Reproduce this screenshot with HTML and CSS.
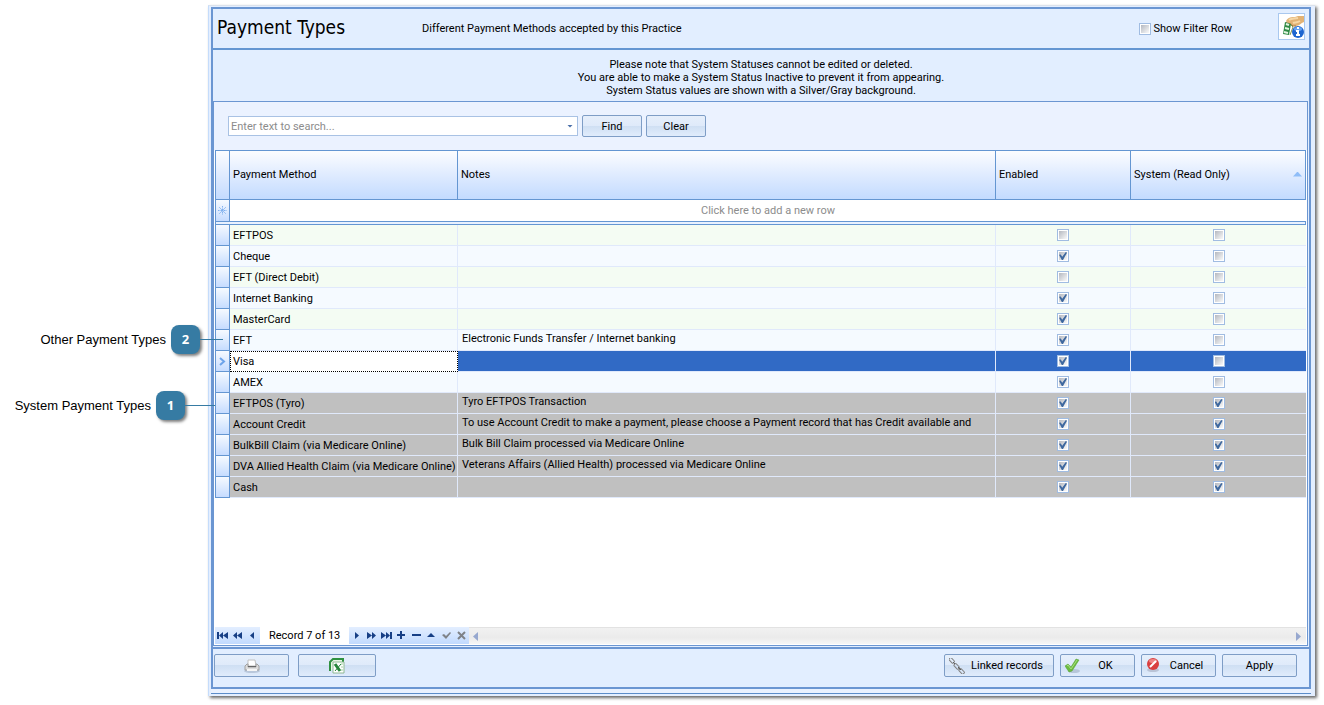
FILE: index.html
```html
<!DOCTYPE html>
<html lang="en">
<head>
    <meta charset="UTF-8">
    <meta name="viewport" content="width=device-width, initial-scale=1.0">
    <title>Payment Types</title>
    <link rel="stylesheet" href="styles.css">
</head>
<body>
    <aside class="callouts">
        <div class="callout">
            <span>Other Payment Types</span>
            <span class="callout-badge">2</span>
        </div>
        <div class="callout callout-system">
            <span>System Payment Types</span>
            <span class="callout-badge">1</span>
        </div>
    </aside>

    <div class="window">
        <main class="dialog">
            <header class="dialog-header">
                <h1>Payment Types</h1>
                <p class="subtitle">Different Payment Methods accepted by this Practice</p>
                <label class="filter-toggle"><input type="checkbox" class="check"> Show Filter Row</label>
                <button type="button" class="info-button" aria-label="Payment info">
                    <svg width="24" height="24" viewBox="0 0 24 24">
                        <path d="M6 6 C8 2 12 2 15 2 L18 1 H24 V7 C21 8 19 11 16 11 C13 12 12 9 9 9 Z" fill="#e2b274"/>
                        <path d="M9 5 C12 3 14 4 18 3 M13 8 C15 7 17 8 20 6" fill="none" stroke="#f6d7a6" stroke-width="2"/>
                        <path d="M6 7 C8 9 11 8 13 11 L16 11" fill="none" stroke="#a9763b"/>
                        <path d="M5 7 L11 9 L9 20 L3 19 Z" fill="#2f8a45"/>
                        <path d="M6 9 L9 10 M5 13 L9 14 M4 17 L8 18" stroke="#e4f5e2" stroke-width="2"/>
                        <path d="M11 10 L13 12 L10 20" fill="none" stroke="#8a9a50"/>
                        <circle cx="18" cy="17" r="6" fill="#1e66d0"/>
                        <ellipse cx="18" cy="14" rx="4" ry="2" fill="#68a4f2"/>
                        <path d="M18 12 V14 M16 16 H18 V20 M16 20 H20" stroke="#fff" stroke-width="2" fill="none"/>
                    </svg>
                </button>
            </header>

            <div class="notice">
                <p>Please note that System Statuses cannot be edited or deleted.</p>
                <p>You are able to make a System Status Inactive to prevent it from appearing.</p>
                <p>System Status values are shown with a Silver/Gray background.</p>
            </div>

            <section class="grid-panel">
                <form class="search-bar">
                    <div class="search-box">
                        <input type="text" aria-label="Search" placeholder="Enter text to search...">
                        <button type="button" aria-label="Recent searches"></button>
                    </div>
                    <button type="button" class="btn btn-small">Find</button>
                    <button type="button" class="btn btn-small">Clear</button>
                </form>

                <table class="grid">
                    <colgroup>
                        <col class="col-indicator">
                        <col class="col-method">
                        <col class="col-notes">
                        <col class="col-enabled">
                        <col class="col-system">
                    </colgroup>
                    <thead>
                        <tr>
                            <th></th>
                            <th>Payment Method</th>
                            <th>Notes</th>
                            <th>Enabled</th>
                            <th class="sorted">System (Read Only)</th>
                        </tr>
                    </thead>
                    <tbody>
                        <tr class="new-row">
                            <td class="indicator">
                                <svg width="9" height="9" viewBox="0 0 9 9"><path d="M4.500 0 V9 M0 4.500 H9 M1 1 L8 8 M8 1 L1 8" stroke="#7fb0ee" stroke-dasharray="1 .5"/></svg>
                            </td>
                            <td colspan="4">Click here to add a new row</td>
                        </tr>
                        <tr class="splitter"><td colspan="5"></td></tr>
                    </tbody>
                    <tbody id="rows"></tbody>
                </table>

                <nav class="navigator">
                    <button type="button" aria-label="First"><svg width="11" height="9" viewBox="0 0 11 9"><path d="M0 1h2v7H0zM6 1v7L2 4.500zM11 1v7L6 4.500z"/></svg></button>
                    <button type="button" aria-label="Previous page"><svg width="11" height="9" viewBox="0 0 11 9"><path d="M5 1v7L1 4.500zM10 1v7L5 4.500z"/></svg></button>
                    <button type="button" aria-label="Previous"><svg width="11" height="9" viewBox="0 0 11 9"><path d="M7 1v7L3 4.500z"/></svg></button>
                    <span class="record">Record 7 of 13</span>
                    <button type="button" aria-label="Next"><svg width="11" height="9" viewBox="0 0 11 9"><path d="M4 1v7l4-3.500z"/></svg></button>
                    <button type="button" aria-label="Next page"><svg width="11" height="9" viewBox="0 0 11 9"><path d="M1 1v7l5-3.500zM6 1v7l4-3.500z"/></svg></button>
                    <button type="button" aria-label="Last"><svg width="11" height="9" viewBox="0 0 11 9"><path d="M0 1v7l5-3.500zM5 1v7l4-3.500zM9 1h2v7H9z"/></svg></button>
                    <button type="button" aria-label="Add"><svg width="11" height="9" viewBox="0 0 11 9"><path d="M4 0h2v3h3v2H6v3H4V5H1V3h3z"/></svg></button>
                    <button type="button" aria-label="Delete"><svg width="11" height="9" viewBox="0 0 11 9"><path d="M1 3h9v2H1z"/></svg></button>
                    <button type="button" aria-label="Edit"><svg width="11" height="9" viewBox="0 0 11 9"><path d="M1 6h8L5 2z"/></svg></button>
                    <button type="button" aria-label="Post" disabled><svg width="11" height="9" viewBox="0 0 11 9"><path d="M1 4l2-1 2 2 4-4 1 1-5 6z"/></svg></button>
                    <button type="button" aria-label="Cancel edit" disabled><svg width="11" height="9" viewBox="0 0 11 9"><path d="M2 1l7 7M9 1L2 8" stroke="#7e8287" stroke-width="2"/></svg></button>
                    <div class="scrollbar">
                        <svg width="6" height="9" viewBox="0 0 6 9"><path d="M5 0v9L0 4.500z"/></svg>
                        <svg width="6" height="9" viewBox="0 0 6 9"><path d="M0 0v9l5-4.500z"/></svg>
                    </div>
                </nav>
            </section>

            <footer class="dialog-footer">
                <button type="button" class="btn btn-print" aria-label="Print">
                    <svg width="16" height="14" viewBox="0 0 16 14">
                        <ellipse cx="8" cy="12" rx="8" ry="2" fill="#b9c8dc"/>
                        <path d="M4 1h7l1 6H4z" fill="#fff" stroke="#c0c0c0"/>
                        <path d="M1 7l2-2h1v3h8V5h1l2 2v4H1z" fill="#dcdcdc" stroke="#a0a0a0"/>
                        <path d="M4 7h8v1H4z" fill="#666"/>
                        <path d="M3 10h10v2H3z" fill="#f6f6f6"/>
                    </svg>
                </button>
                <button type="button" class="btn btn-excel" aria-label="Export to Excel">
                    <svg width="16" height="16" viewBox="0 0 16 16">
                        <path d="M1 13V4l3-3h10v3" fill="#eaf7e6" stroke="#2f9140" stroke-width="2"/>
                        <path d="M4 4h11v11H4z" fill="#fff" stroke="#8fb893"/>
                        <path d="M12 6h2M12 9h2M12 12h2" stroke="#a5d4a5"/>
                        <path d="M6 6l5 7" stroke="#26853a" stroke-width="3"/>
                        <path d="M12 6l-6 7" stroke="#26853a" stroke-width="1"/>
                    </svg>
                </button>
                <span class="spacer"></span>
                <button type="button" class="btn btn-linked">
                    <svg width="16" height="16" viewBox="0 0 16 16">
                        <g fill="none" stroke="#808080">
                            <rect x="-3" y="-1" width="6" height="3" rx="1" transform="translate(3 2) rotate(46)"/>
                            <rect x="-3" y="-1" width="6" height="3" rx="1" transform="translate(8 8) rotate(46)"/>
                            <rect x="-3" y="-1" width="6" height="3" rx="1" transform="translate(13 13) rotate(46)"/>
                        </g>
                        <path d="M4 4l2 2M9 9l3 3" stroke="#606060"/>
                    </svg>
                    <span>Linked records</span>
                </button>
                <button type="button" class="btn btn-action">
                    <svg width="16" height="16" viewBox="0 0 16 16">
                        <ellipse cx="9" cy="13" rx="6" ry="2" fill="#b6c6da"/>
                        <path d="M0 8l3-2 3 3 5-8 3 1-7 11-3 1z" fill="#6cbb40" stroke="#4f9f2c" stroke-width=".5"/>
                        <path d="M2 8l1-1 3 4 6-9" fill="none" stroke="#a9e07f"/>
                    </svg>
                    <span>OK</span>
                </button>
                <button type="button" class="btn btn-action">
                    <svg width="16" height="16" viewBox="0 0 16 16">
                        <ellipse cx="7" cy="12" rx="6" ry="2" fill="#b9c3d6"/>
                        <circle cx="7" cy="6" r="6" fill="#d93f3f"/>
                        <ellipse cx="7" cy="3" rx="4" ry="2" fill="#ef8585"/>
                        <path d="M4 9l6-6" stroke="#fff" stroke-width="2"/>
                    </svg>
                    <span>Cancel</span>
                </button>
                <button type="button" class="btn btn-action"><span>Apply</span></button>
            </footer>
        </main>
    </div>

    <script src="script.js"></script>
</body>
</html>
```
FILE: styles.css
```css
* {
    box-sizing: border-box;
}
body {
    margin: 0;
    min-height: 100vh;
    display: flex;
    background-color: #fff;
    color: #000;
    font-family: Tahoma, Roboto, sans-serif;
    font-size: 11px;
    line-height: 13px;
}
button, input {
    font: inherit;
    color: inherit;
}
h1, p {
    margin: 0;
    font-weight: normal;
}
svg {
    display: block;
    flex: none;
}

/* callouts */
.callouts {
    flex: none;
    width: 208px;
    padding: 325px 8px 0 0;
    font: 13px "Liberation Sans", Arial, sans-serif;
}
.callout {
    position: relative;
    display: flex;
    align-items: center;
    justify-content: flex-end;
    gap: 5px;
    margin-bottom: 37px;
}
.callout-system {
    margin-right: 15px;
}
.callout-badge {
    width: 29px;
    height: 29px;
    border-radius: 8px;
    background-color: #367ba3;
    box-shadow: 2px 2px 3px rgba(0, 0, 0, 0.5);
    color: #fff;
    font: bold 13px/29px "Open Sans", sans-serif;
    text-align: center;
}
.callout::after {
    content: "";
    position: absolute;
    left: 100%;
    top: 14px;
    width: 23px;
    height: 1px;
    background-color: #367ba3;
    z-index: 1;
}
.callout-system::after {
    width: 30px;
}

/* window frame */
.window {
    flex: 1;
    min-width: 0;
    display: flex;
    margin: 5px 9px 9px 0;
    padding: 1px 4px 7px 2px;
    background-color: #e3eeff;
    border-left: 1px solid #c5dcfb;
    border-top: 1px solid #dbe2ec;
    box-shadow: 2px 2px 3px rgba(0, 0, 0, 0.6);
}
.dialog {
    flex: 1;
    min-width: 0;
    display: flex;
    flex-direction: column;
    border: 2px solid #6b96d2;
    background-color: #e2eeff;
    box-shadow: 0 4px #e9f1ff, 0 5px #5b8cc9;
}
.dialog-header {
    display: flex;
    align-items: center;
    height: 41px;
    padding: 0 4px;
    border-bottom: 2px solid #6496d2;
}
.dialog-header h1 {
    width: 205px;
    font-family: Tahoma, "DejaVu Sans Condensed", sans-serif;
    font-size: 19px;
    line-height: 24px;
    padding-bottom: 4px;
}
.subtitle {
    flex: 1;
}
.filter-toggle {
    display: flex;
    align-items: center;
    gap: 3px;
    margin-right: 46px;
}
.info-button {
    width: 27px;
    height: 27px;
    padding: 1px;
    margin-bottom: 4px;
    border: 1px solid #a9c8ef;
    background-color: #fff;
}
.notice {
    padding: 8px 0 4px;
    text-align: center;
}

/* check boxes */
.check {
    appearance: none;
    position: relative;
    display: block;
    flex: none;
    width: 12px;
    height: 12px;
    margin: 0;
    padding: 1px;
    border: 1px solid #a0bce2;
    background: linear-gradient(135deg, #b4b8c0, #fafafa) content-box, #fff;
}
.check:checked::after {
    content: "";
    position: absolute;
    left: 1px;
    top: 1px;
    width: 8px;
    height: 8px;
    background-color: #3e689f;
    clip-path: polygon(0 35%, 22% 30%, 40% 60%, 85% 0, 100% 8%, 50% 100%, 35% 100%);
}

/* grid */
.grid-panel {
    flex: 1;
    display: flex;
    flex-direction: column;
    margin: 0 1px 1px 0;
    padding: 0 1px 1px;
    border: 1px solid #6b96d2;
    background-color: #fff;
}
.search-bar {
    display: flex;
    align-items: center;
    gap: 4px;
    height: 48px;
    margin: 0 -1px;
    padding: 0 14px;
    background-color: #ebf2ff;
}
.search-box {
    display: flex;
    width: 350px;
    height: 20px;
    border: 1px solid #a9c2e4;
    background-color: #fff;
}
.search-box input {
    flex: 1;
    min-width: 0;
    padding: 0 2px;
    border: none;
    background: none;
    outline: none;
}
.search-box input::placeholder {
    color: #8c8c8c;
    opacity: 1;
}
.search-box button {
    width: 14px;
    padding: 0;
    border: none;
    background: none;
}
.search-box button::before {
    content: "";
    display: block;
    margin: 0 auto;
    width: 6px;
    height: 3px;
    background-color: #4a6fa8;
    clip-path: polygon(0 0, 100% 0, 50% 100%);
}
.grid {
    width: 100%;
    table-layout: fixed;
    border-spacing: 0;
    border-top: 1px solid #6496d2;
}
.col-indicator {
    width: 15px;
}
.col-method {
    width: 228px;
}
.col-enabled {
    width: 135px;
}
.col-system {
    width: 175px;
}
.grid th {
    height: 49px;
    padding: 0 3px 2px;
    border-right: 1px solid #6496d2;
    border-bottom: 1px solid #6496d2;
    background: linear-gradient(#fcfdff, #dfebff 50%, #c3dbff);
    font-weight: normal;
    text-align: left;
}
.sorted::after {
    content: "";
    float: right;
    width: 9px;
    height: 5px;
    margin-top: 4px;
    background-color: #8fbdf8;
    clip-path: polygon(50% 0, 100% 100%, 0 100%);
}
.grid th:first-child, .indicator {
    border-left: 1px solid #6496d2;
}
.grid td {
    height: 21px;
    padding: 0 3px;
    border-right: 1px solid #e0e9fb;
    border-bottom: 1px solid #e0e9fb;
    white-space: nowrap;
    overflow: hidden;
}
.grid td:last-child {
    border-right: none;
}
.grid td.indicator {
    padding: 0 2px;
    border-right: 1px solid #6496d2;
    border-bottom: 1px solid #6496d2;
    background: linear-gradient(#f6faff, #c6dcff);
}
.new-row td {
    color: #8c8c8c;
    text-align: center;
}
.grid .new-row td {
    height: 22px;
    border-bottom: 1px solid #6496d2;
}
.grid .splitter td {
    height: 3px;
    padding: 0;
    border-left: 1px solid #6496d2;
    border-right: 1px solid #6496d2;
    border-bottom: 1px solid #6496d2;
    background-color: #e8f1ff;
}
.row-odd {
    background-color: #f4fcf3;
}
.row-even {
    background-color: #f5faff;
}
.row-system {
    background-color: #c0c0c0;
}
.row-selected {
    background-color: #316ac5;
}
.grid .row-selected .method {
    padding: 0 2px;
    border: 1px dotted #000;
    background-color: #fff;
}
.grid .notes {
    padding: 0 4px 4px;
}
.grid .check {
    margin: 0 auto;
}

/* record navigator */
.navigator {
    display: flex;
    height: 17px;
    margin-top: auto;
}
.navigator button {
    display: flex;
    align-items: center;
    justify-content: center;
    width: 15px;
    padding: 0;
    border: none;
    background: linear-gradient(#e3eeff, #c1dafe);
}
.navigator button svg {
    fill: #173f85;
}
.navigator button:disabled svg {
    fill: #7e8287;
}
.record {
    width: 89px;
    padding: 0 8px 0 9px;
    line-height: 17px;
    white-space: nowrap;
}
.scrollbar {
    flex: 1;
    display: flex;
    align-items: center;
    justify-content: space-between;
    padding: 0 4px;
    border-top: 1px solid #e2e2e2;
    background: linear-gradient(#f1f1f1, #ebebeb 60%, #f6f6f6);
    fill: #97a8cf;
}

/* buttons */
.btn {
    display: flex;
    align-items: center;
    justify-content: center;
    height: 23px;
    padding: 0 4px;
    border: 1px solid #7e9dc6;
    border-radius: 2px;
    background: linear-gradient(#e6effb, #dfeafa 48%, #cfdff3 50%, #e0ecfc);
}
.btn-small {
    width: 60px;
    height: 22px;
}
.dialog-footer {
    display: flex;
    gap: 6px;
    height: 40px;
    padding: 5px 12px 0 1px;
    border-top: 2px solid #6b96d2;
}
.spacer {
    flex: 1;
}
.btn-print {
    width: 75px;
    margin-right: 3px;
}
.btn-excel {
    width: 78px;
}
.btn-linked {
    width: 110px;
}
.btn-action {
    width: 75px;
}
.btn-linked span, .btn-action span {
    flex: 1;
    text-align: center;
}
```
FILE: script.js
```js
const rows = [
    { method: 'EFTPOS', notes: '', enabled: false, system: false },
    { method: 'Cheque', notes: '', enabled: true, system: false },
    { method: 'EFT (Direct Debit)', notes: '', enabled: false, system: false },
    { method: 'Internet Banking', notes: '', enabled: true, system: false },
    { method: 'MasterCard', notes: '', enabled: true, system: false },
    { method: 'EFT', notes: 'Electronic Funds Transfer / Internet banking', enabled: true, system: false },
    { method: 'Visa', notes: '', enabled: true, system: false, selected: true },
    { method: 'AMEX', notes: '', enabled: true, system: false },
    { method: 'EFTPOS (Tyro)', notes: 'Tyro EFTPOS Transaction', enabled: true, system: true },
    { method: 'Account Credit', notes: 'To use Account Credit to make a payment, please choose a Payment record that has Credit available and', enabled: true, system: true },
    { method: 'BulkBill Claim (via Medicare Online)', notes: 'Bulk Bill Claim processed via Medicare Online', enabled: true, system: true },
    { method: 'DVA Allied Health Claim (via Medicare Online)', notes: 'Veterans Affairs (Allied Health) processed via Medicare Online', enabled: true, system: true },
    { method: 'Cash', notes: '', enabled: true, system: true }
];

const arrow = '<svg width="8" height="9" viewBox="0 0 8 9"><path d="M2 1l4 3.500L2 8" fill="none" stroke="#6ea4ea" stroke-width="2"/></svg>';

function rowClass(row, index) {
    if (row.selected) return 'row-selected';
    if (row.system) return 'row-system';
    return index % 2 === 0 ? 'row-odd' : 'row-even';
}

function checkBox(label, checked) {
    return `<input type="checkbox" class="check" aria-label="${label}" ${checked ? 'checked' : ''}>`;
}

document.getElementById('rows').innerHTML = rows.map((row, index) => `
    <tr class="${rowClass(row, index)}">
        <td class="indicator">${row.selected ? arrow : ''}</td>
        <td class="method">${row.method}</td>
        <td class="notes">${row.notes}</td>
        <td>${checkBox(row.method + ' enabled', row.enabled)}</td>
        <td>${checkBox(row.method + ' system', row.system)}</td>
    </tr>
`).join('');
```
